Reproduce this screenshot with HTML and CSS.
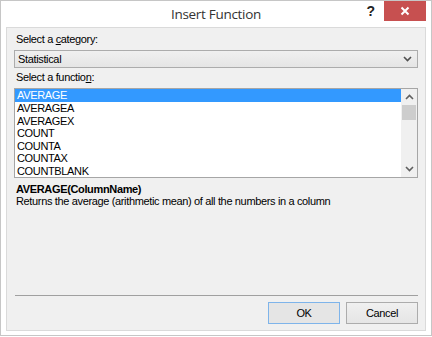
FILE: index.html
```html
<!DOCTYPE html>
<html>
<head>
<meta charset="utf-8">
<link rel="stylesheet" href="styles.css">
</head>
<body>
<div class="window">
  <div class="titlebar">
    <div></div>
    <div class="title">Insert Function</div>
    <div class="controls">
      <span class="help">?</span>
      <span class="close"><svg width="10" height="10" viewBox="0 0 10 10"><path d="M1.5 1.5 L8.5 8.5 M8.5 1.5 L1.5 8.5" stroke="#fff" stroke-width="2" fill="none"/></svg></span>
    </div>
  </div>
  <div class="client">
    <div class="label first">Select a <u>c</u>ategory:</div>
    <div class="combo">
      <span>Statistical</span>
      <svg class="chev" width="9" height="6" viewBox="0 0 9 6"><path d="M1 1 L4.5 4.5 L8 1" stroke="#505050" stroke-width="1.6" fill="none"/></svg>
    </div>
    <div class="label second">Select a functio<u>n</u>:</div>
    <div class="listbox">
      <div class="items">
        <div class="item selected">AVERAGE</div>
        <div class="item">AVERAGEA</div>
        <div class="item">AVERAGEX</div>
        <div class="item">COUNT</div>
        <div class="item">COUNTA</div>
        <div class="item">COUNTAX</div>
        <div class="item">COUNTBLANK</div>
      </div>
      <div class="scrollbar">
        <div class="arrow"><svg width="9" height="6" viewBox="0 0 9 6"><path d="M1 5 L4.5 1.5 L8 5" stroke="#606060" stroke-width="1.6" fill="none"/></svg></div>
        <div class="thumb"></div>
        <div class="track"></div>
        <div class="arrow"><svg width="9" height="6" viewBox="0 0 9 6"><path d="M1 1 L4.5 4.5 L8 1" stroke="#606060" stroke-width="1.6" fill="none"/></svg></div>
      </div>
    </div>
    <div class="sig">AVERAGE(ColumnName)</div>
    <div class="desc">Returns the average (arithmetic mean) of all the numbers in a column</div>
    <div class="spacer"></div>
    <div class="separator"></div>
    <div class="buttons">
      <button class="btn default">OK</button>
      <button class="btn">Cancel</button>
    </div>
  </div>
</div>
</body>
</html>
```
FILE: styles.css
```css
html, body {
  margin: 0;
  padding: 0;
  background: #ffffff;
}
.window {
  width: 432px;
  height: 336px;
  box-sizing: border-box;
  border: 1px solid #c6c6c6;
  background: #ffffff;
  display: flex;
  flex-direction: column;
  font-family: "Liberation Sans", Arial, sans-serif;
  font-size: 11px;
  letter-spacing: -0.35px;
  color: #000;
}
.titlebar {
  height: 26px;
  display: grid;
  grid-template-columns: 1fr auto 1fr;
  align-items: start;
}
.title {
  font-family: "Open Sans", "Noto Sans", sans-serif;
  font-size: 13.5px;
  color: #333;
  line-height: 27px;
  letter-spacing: -0.3px;
}
.controls {
  display: flex;
  justify-content: flex-end;
  align-items: start;
  padding-right: 5px;
}
.help {
  font-family: "Liberation Sans", Arial, sans-serif;
  font-weight: bold;
  font-size: 14px;
  letter-spacing: 0;
  color: #222;
  line-height: 20px;
  margin-right: 9px;
}
.close {
  width: 42px;
  height: 20px;
  background: #c75050;
  display: flex;
  align-items: center;
  justify-content: center;
}
.client {
  flex: 1;
  margin: 0 5px 4px 5px;
  border: 1px solid #dadada;
  background: #f0f0f0;
  display: flex;
  flex-direction: column;
  padding: 5px 7px 6px 7px;
}
.label {
  line-height: 13px;
  padding-left: 2px;
}
.label.second { margin-top: 3px; }
.combo {
  margin-top: 4px;
  height: 18px;
  box-sizing: border-box;
  border: 1px solid #acacac;
  background: linear-gradient(#f0f0f0, #e5e5e5);
  display: flex;
  align-items: center;
  justify-content: space-between;
  padding: 0 5px 0 3px;
}
.chev { display: block; }
.listbox {
  margin-top: 4px;
  height: 90px;
  box-sizing: border-box;
  border: 1px solid #a6a6a6;
  background: #fff;
  display: flex;
}
.items { flex: 1; }
.item {
  height: 12.5px;
  line-height: 12.5px;
  padding-left: 2px;
}
.item.selected {
  background: #3399ff;
  color: #fff;
  height: 13px;
  line-height: 13px;
}
.scrollbar {
  width: 16px;
  background: #f0f0f0;
  display: flex;
  flex-direction: column;
}
.arrow {
  height: 16px;
  display: flex;
  align-items: center;
  justify-content: center;
}
.thumb {
  height: 15px;
  margin: 0 1px;
  background: #cdcdcd;
}
.track { flex: 1; }
.sig {
  margin-top: 5px;
  font-weight: bold;
  line-height: 12px;
  padding-left: 2px;
}
.desc {
  line-height: 12px;
  padding-left: 2px;
}
.spacer { flex: 1; }
.separator {
  height: 1px;
  background: #a0a0a0;
  margin: 0 0 6px 1px;
}
.buttons {
  display: flex;
  justify-content: flex-end;
  gap: 6px;
}
.btn {
  width: 72px;
  height: 22px;
  box-sizing: border-box;
  border: 1px solid #acacac;
  background: linear-gradient(#f0f0f0, #e5e5e5);
  font-family: "Liberation Sans", Arial, sans-serif;
  font-size: 11px;
  letter-spacing: -0.35px;
  color: #000;
  padding: 0;
  margin: 0;
}
.btn.default {
  border-color: #7eb4ea;
  background: #e5e5e5;
}
```
